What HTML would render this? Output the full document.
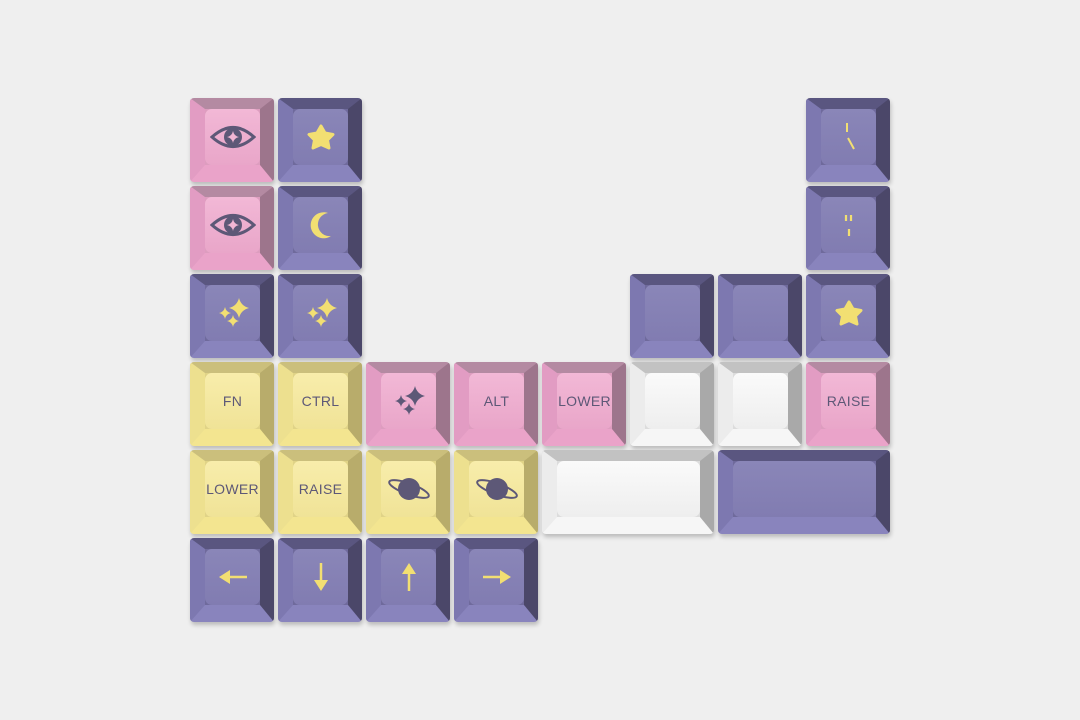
<!DOCTYPE html>
<html><head><meta charset="utf-8"><style>
body{margin:0;width:1080px;height:720px;background:#efefef;position:relative;overflow:hidden;font-family:"Liberation Sans",sans-serif}
.k{position:absolute;width:84px;height:84px;box-sizing:border-box;border-style:solid;border-width:11px 14px 17px 15px;border-radius:4px;box-shadow:1px 3px 4px rgba(0,0,0,.22)}
.k .f{width:100%;height:100%;border-radius:7px;display:flex;align-items:center;justify-content:center;color:#5d5877;font-size:14px;letter-spacing:.3px}
.p{border-color:#b48aa2 #9d758c #eaa3c9 #e29cc3;background:#dd9dbf}.p .f{background:linear-gradient(#f2b8d6,#e9a6c9)}
.u{border-color:#5a5680 #4b4769 #8984bd #7d78b0;background:#6f6a9c}.u .f{background:linear-gradient(#8a86b8,#817cb1)}
.y{border-color:#cbbf7c #b8ac6b #f3e590 #ede08f;background:#e0d387}.y .f{background:linear-gradient(#f8edab,#f0e397)}
.w{border-color:#c2c2c2 #a9a9a9 #f6f6f6 #ececec;background:#dcdcdc}.w .f{background:linear-gradient(#fafafa,#eeeeee)}
svg{display:block}
</style></head><body>
<div class="k p" style="left:190px;top:98px"><div class="f"><svg width="46" height="24" viewBox="0 0 46 24"><path d="M2 12 Q23 -7 44 12 Q23 31 2 12Z" fill="none" stroke="#5d5877" stroke-width="3"/><circle cx="23" cy="12" r="9" fill="#5d5877"/><path d="M23 6Q24 11 29 12Q24 13 23 18Q22 13 17 12Q22 11 23 6Z" fill="#f2b6d4"/></svg></div></div>
<div class="k u" style="left:278px;top:98px"><div class="f"><svg width="30" height="28" viewBox="0 0 30 28"><path d="M15 3 L19 10 L27 11.5 L21.5 17 L23 25 L15 21.5 L7 25 L8.5 17 L3 11.5 L11 10Z" fill="#f2df72" stroke="#f2df72" stroke-width="3" stroke-linejoin="round"/></svg></div></div>
<div class="k u" style="left:806px;top:98px"><div class="f"><svg width="20" height="32" viewBox="0 0 20 32"><path d="M8 2V11M9 17L15 28" stroke="#f2df72" stroke-width="2"/></svg></div></div>
<div class="k p" style="left:190px;top:186px"><div class="f"><svg width="46" height="24" viewBox="0 0 46 24"><path d="M2 12 Q23 -7 44 12 Q23 31 2 12Z" fill="none" stroke="#5d5877" stroke-width="3"/><circle cx="23" cy="12" r="9" fill="#5d5877"/><path d="M23 6Q24 11 29 12Q24 13 23 18Q22 13 17 12Q22 11 23 6Z" fill="#f2b6d4"/></svg></div></div>
<div class="k u" style="left:278px;top:186px"><div class="f"><svg width="30" height="32" viewBox="0 0 30 32"><path d="M22 4 A13 13 0 1 0 25 27 A11 11 0 0 1 22 4Z" fill="#f2df72"/></svg></div></div>
<div class="k u" style="left:806px;top:186px"><div class="f"><svg width="20" height="32" viewBox="0 0 20 32"><path d="M7 6V12M12 6V12M10 20V27" stroke="#f2df72" stroke-width="2.2"/></svg></div></div>
<div class="k u" style="left:190px;top:274px"><div class="f"><svg width="36" height="36" viewBox="0 0 36 36"><g fill="#f2df72"><path d="M24 3Q26 11 34 13Q26 15 24 23Q22 15 14 13Q22 11 24 3Z"/><path d="M10 12Q11 17 16 18Q11 19 10 24Q9 19 4 18Q9 17 10 12Z"/><path d="M18 20Q19 25 24 26Q19 27 18 32Q17 27 12 26Q17 25 18 20Z"/></g></svg></div></div>
<div class="k u" style="left:278px;top:274px"><div class="f"><svg width="36" height="36" viewBox="0 0 36 36"><g fill="#f2df72"><path d="M24 3Q26 11 34 13Q26 15 24 23Q22 15 14 13Q22 11 24 3Z"/><path d="M10 12Q11 17 16 18Q11 19 10 24Q9 19 4 18Q9 17 10 12Z"/><path d="M18 20Q19 25 24 26Q19 27 18 32Q17 27 12 26Q17 25 18 20Z"/></g></svg></div></div>
<div class="k u" style="left:630px;top:274px"><div class="f"></div></div>
<div class="k u" style="left:718px;top:274px"><div class="f"></div></div>
<div class="k u" style="left:806px;top:274px"><div class="f"><svg width="30" height="28" viewBox="0 0 30 28"><path d="M15 3 L19 10 L27 11.5 L21.5 17 L23 25 L15 21.5 L7 25 L8.5 17 L3 11.5 L11 10Z" fill="#f2df72" stroke="#f2df72" stroke-width="3" stroke-linejoin="round"/></svg></div></div>
<div class="k y" style="left:190px;top:362px"><div class="f">FN</div></div>
<div class="k y" style="left:278px;top:362px"><div class="f">CTRL</div></div>
<div class="k p" style="left:366px;top:362px"><div class="f"><svg width="36" height="36" viewBox="0 0 36 36"><g fill="#5d5877"><path d="M24 3Q26 11 34 13Q26 15 24 23Q22 15 14 13Q22 11 24 3Z"/><path d="M10 12Q11 17 16 18Q11 19 10 24Q9 19 4 18Q9 17 10 12Z"/><path d="M18 20Q19 25 24 26Q19 27 18 32Q17 27 12 26Q17 25 18 20Z"/></g></svg></div></div>
<div class="k p" style="left:454px;top:362px"><div class="f">ALT</div></div>
<div class="k p" style="left:542px;top:362px"><div class="f">LOWER</div></div>
<div class="k w" style="left:630px;top:362px"><div class="f"></div></div>
<div class="k w" style="left:718px;top:362px"><div class="f"></div></div>
<div class="k p" style="left:806px;top:362px"><div class="f">RAISE</div></div>
<div class="k y" style="left:190px;top:450px"><div class="f">LOWER</div></div>
<div class="k y" style="left:278px;top:450px"><div class="f">RAISE</div></div>
<div class="k y" style="left:366px;top:450px"><div class="f"><svg width="46" height="30" viewBox="0 0 46 30"><ellipse cx="23" cy="15" rx="21" ry="5.5" transform="rotate(20 23 15)" fill="none" stroke="#5d5877" stroke-width="2"/><circle cx="23" cy="15" r="11" fill="#5d5877"/></svg></div></div>
<div class="k y" style="left:454px;top:450px"><div class="f"><svg width="46" height="30" viewBox="0 0 46 30"><ellipse cx="23" cy="15" rx="21" ry="5.5" transform="rotate(20 23 15)" fill="none" stroke="#5d5877" stroke-width="2"/><circle cx="23" cy="15" r="11" fill="#5d5877"/></svg></div></div>
<div class="k w" style="left:542px;top:450px;width:172px"><div class="f"></div></div>
<div class="k u" style="left:718px;top:450px;width:172px"><div class="f"></div></div>
<div class="k u" style="left:190px;top:538px"><div class="f"><svg width="34" height="20" viewBox="0 0 34 20"><path d="M3 10L14 3V17Z" fill="#f2df72"/><path d="M12 10H31" stroke="#f2df72" stroke-width="2.5"/></svg></div></div>
<div class="k u" style="left:278px;top:538px"><div class="f"><svg width="20" height="34" viewBox="0 0 20 34"><path d="M10 31L3 20H17Z" fill="#f2df72"/><path d="M10 3V22" stroke="#f2df72" stroke-width="2.5"/></svg></div></div>
<div class="k u" style="left:366px;top:538px"><div class="f"><svg width="20" height="34" viewBox="0 0 20 34"><path d="M10 3L3 14H17Z" fill="#f2df72"/><path d="M10 12V31" stroke="#f2df72" stroke-width="2.5"/></svg></div></div>
<div class="k u" style="left:454px;top:538px"><div class="f"><svg width="34" height="20" viewBox="0 0 34 20"><path d="M31 10L20 3V17Z" fill="#f2df72"/><path d="M3 10H22" stroke="#f2df72" stroke-width="2.5"/></svg></div></div>
</body></html>
